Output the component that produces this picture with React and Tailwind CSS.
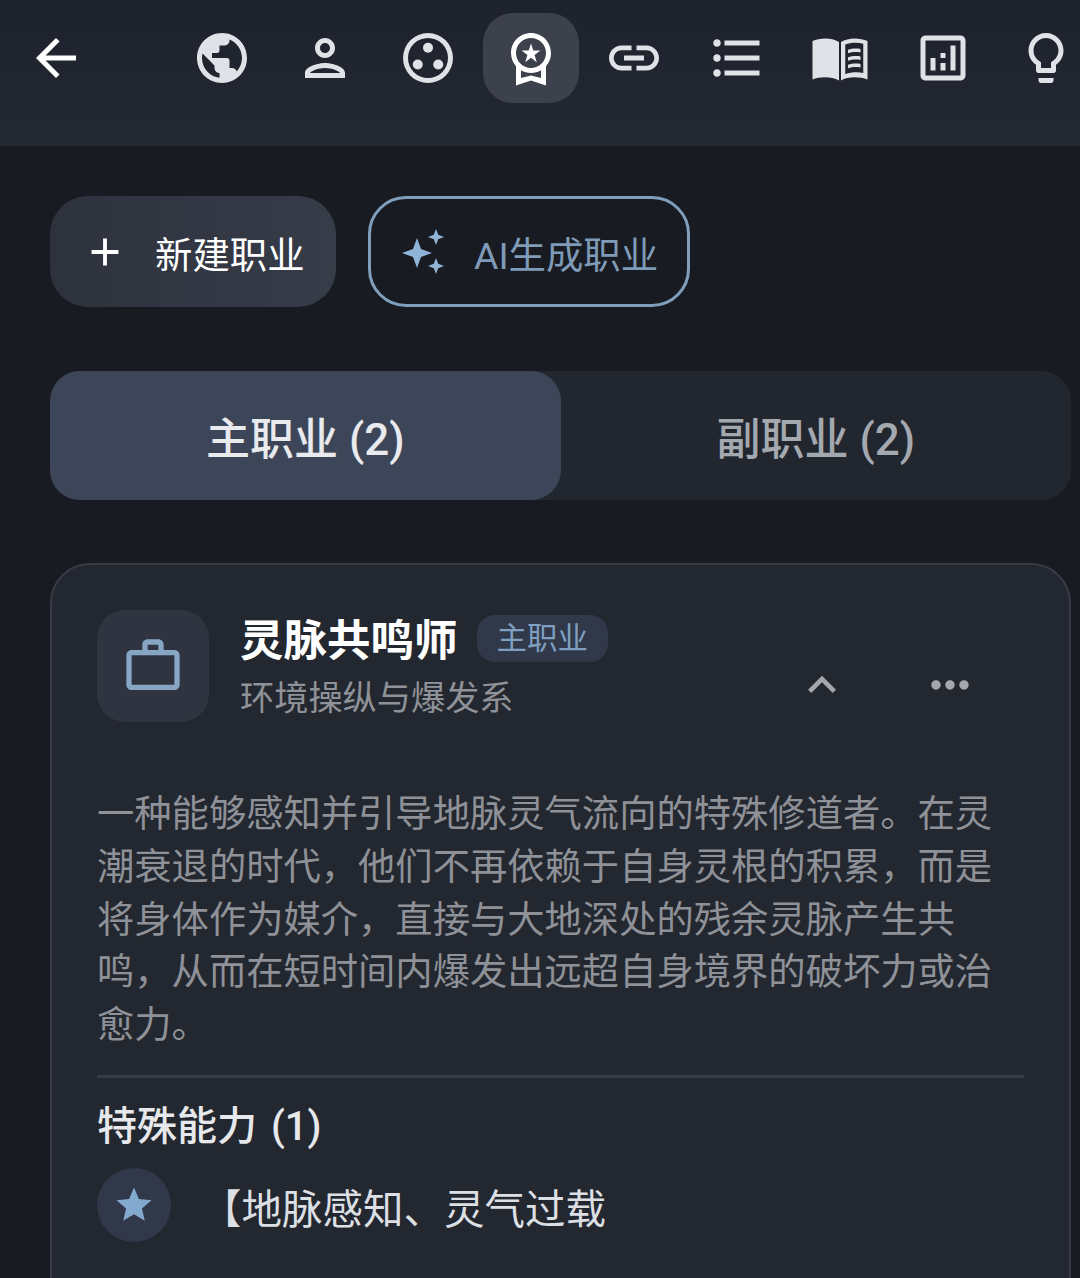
import {
  MdAdd,
  MdArrowBack,
  MdExpandLess,
  MdFormatListBulleted,
  MdLink,
  MdMoreHoriz,
  MdOutlineAnalytics,
  MdOutlineLightbulb,
  MdOutlinePerson,
  MdOutlineWorkOutline,
  MdOutlineWorkspacePremium,
  MdPublic,
  MdStar,
} from 'react-icons/md'

const FONT = "font-['Roboto','Noto_Sans_CJK_SC',sans-serif]"

function DotsIcon({ size = 60 }) {
  return (
    <svg width={size} height={size} viewBox="0 0 24 24" fill="currentColor">
      <path fillRule="evenodd" d="M12 2a10 10 0 1 0 0 20 10 10 0 0 0 0-20zm0 2a8 8 0 1 1 0 16 8 8 0 0 1 0-16z" />
      <circle cx="12" cy="7.9" r="2" />
      <circle cx="7.9" cy="14.6" r="2" />
      <circle cx="16.1" cy="14.6" r="2" />
    </svg>
  )
}

function BookIcon({ size = 60 }) {
  return (
    <svg width={size} height={size} viewBox="0 0 24 24" fill="currentColor">
      <path d="M1 5.2C3.8 3.9 8.6 3.7 11.6 5.6V21c-3-1.7-7.8-1.500-10.600-.4z" />
      <path fillRule="evenodd" d="M12.4 5.6c2.6-1.800 7.400-1.900 10.600-.4v15.400c-3-1.100-7.800-1.300-10.600.4zm1.700 1v11.900c2-.8 5-1 7.200-.5V6.300c-2.400-.6-5.300-.4-7.200.3z" />
      <path d="M15.200 8.700c1.500-.5 3.500-.6 5-.3v1.400c-1.500-.3-3.500-.2-5 .3zm0 3c1.500-.5 3.500-.6 5-.3v1.400c-1.500-.3-3.500-.2-5 .3zm0 3c1.500-.5 3.500-.6 5-.3v1.400c-1.500-.3-3.500-.2-5 .3z" />
    </svg>
  )
}

function SparkleIcon() {
  return (
    <svg width="48" height="48" viewBox="0 0 48 48" fill="currentColor">
      <path d="M17 10l4 11 11 4-11 4-4 11-4-11-11-4 11-4z" />
      <path d="M36 1l2.200 5.800L44 9l-5.800 2.200L36 17l-2.200-5.800L28 9l5.800-2.200z" />
      <path d="M36 30l2.200 5.800L44 38l-5.800 2.200L36 46l-2.200-5.800L28 38l5.800-2.200z" />
    </svg>
  )
}

const NAV_ICONS = [
  { id: 'world', el: <MdPublic size={60} /> },
  { id: 'person', el: <MdOutlinePerson size={60} /> },
  { id: 'dots', el: <DotsIcon /> },
  { id: 'career', el: <MdOutlineWorkspacePremium size={60} />, active: true },
  { id: 'link', el: <MdLink size={60} /> },
  { id: 'list', el: <MdFormatListBulleted size={60} /> },
  { id: 'book', el: <BookIcon /> },
  { id: 'stats', el: <MdOutlineAnalytics size={60} /> },
  { id: 'idea', el: <MdOutlineLightbulb size={60} /> },
]

export default function App() {
  return (
    <div className={`${FONT} h-[1278px] w-[1080px] overflow-hidden bg-[#181b22]`}>
      {/* Top nav */}
      <header className="flex h-[146px] items-start bg-gradient-to-b from-[#1e222c] to-[#242832] pl-2 pt-[13px]">
        <button className="flex h-[90px] w-[96px] shrink-0 items-center justify-center text-white">
          <MdArrowBack size={60} />
        </button>
        <nav className="ml-[70px] flex shrink-0 gap-[7px]">
          {NAV_ICONS.map(({ id, el, active }) => (
            <button
              key={id}
              className={`flex h-[90px] w-[96px] shrink-0 items-center justify-center rounded-[30px] ${
                active ? 'bg-[#3c414c] text-white' : 'text-[#dfe2e6]'
              }`}
            >
              {el}
            </button>
          ))}
        </nav>
      </header>

      <main className="pl-[50px] pr-[9px]">
        {/* Actions */}
        <div className="flex gap-8 pt-[50px]">
          <button className="flex h-[111px] w-[286px] items-center gap-[27px] rounded-[38px] bg-gradient-to-r from-[#2d323d] to-[#373c49] pl-[32px] text-[37.4px] text-white">
            <MdAdd size={46} />
            <span className="pt-[9px]">新建职业</span>
          </button>
          <button className="flex h-[111px] w-[322px] items-center gap-[26px] rounded-[38px] border-[3px] border-[#7f9fbd] pl-[29px] text-[37.4px] text-[#7f9bb8]">
            <span className="text-[#8fb4d6]">
              <SparkleIcon />
            </span>
            <span className="pt-[9px]">AI生成职业</span>
          </button>
        </div>

        {/* Tabs */}
        <div className="mt-[64px] flex h-[129px] rounded-[30px] bg-[#22262f]">
          <button className="flex-1 rounded-[30px] bg-[#3d4659] pt-2 text-[44px] font-medium text-[#e8eaee]">主职业 (2)</button>
          <button className="flex-1 pt-2 text-[44px] font-medium text-[#a4a8af]">副职业 (2)</button>
        </div>

        {/* Career card */}
        <section className="mt-[63px] rounded-[40px] border-2 border-[#363b46] bg-[#23272f] px-[45px] pt-[45px] pb-24">
          <div className="flex">
            <div className="flex h-[112px] w-[112px] shrink-0 items-center justify-center rounded-[28px] bg-[#2f3440] text-[#87a6c4]">
              <MdOutlineWorkOutline size={64} />
            </div>
            <div className="ml-[31px] w-[521px]">
              <div className="flex items-start">
                <h2 className="pt-[3px] text-[43.5px] leading-[58px] font-bold text-white">灵脉共鸣师</h2>
                <span className="ml-[19px] mt-[5px] flex h-[47px] items-center rounded-[18px] bg-[#30384a] px-5 text-[30.5px] text-[#7f9fc0]">
                  主职业
                </span>
              </div>
              <p className="mt-[4px] text-[34.2px] leading-[46px] text-[#8f9298]">环境操纵与爆发系</p>
            </div>
            <div className="mt-[40px] ml-[33px] flex h-[70px] items-center gap-[72px] text-[#a4a7ac]">
              <MdExpandLess size={56} />
              <MdMoreHoriz size={56} />
            </div>
          </div>

          <p className="mt-[66px] text-[37.3px] leading-[52.75px] text-[#8e9197]">
            一种能够感知并引导地脉灵气流向的特殊修道者。在灵潮衰退的时代，他们不再依赖于自身灵根的积累，而是将身体作为媒介，直接与大地深处的残余灵脉产生共鸣，从而在短时间内爆发出远超自身境界的破坏力或治愈力。
          </p>

          <div className="mt-[23px] h-[3px] bg-[#363b46]" />

          <h3 className="mt-[22px] text-[40px] leading-[54px] font-medium text-[#e6e8eb] [word-spacing:4px]">特殊能力 (1)</h3>

          <div className="mt-[14px] flex items-center gap-[30px]">
            <div className="flex h-[74px] w-[74px] items-center justify-center rounded-full bg-[#30384a] text-[#84a9cf]">
              <MdStar size={42} />
            </div>
            <span className="pt-[12px] text-[40.5px] text-[#dcdfe3]">【地脉感知、灵气过载</span>
          </div>
        </section>
      </main>
    </div>
  )
}
